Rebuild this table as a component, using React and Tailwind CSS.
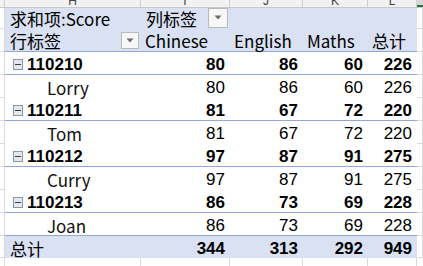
const cjk = "font-['Noto_Sans_CJK_SC','Noto_Sans',sans-serif]";
const num = "font-['Liberation_Sans',Arial,sans-serif]";

const cols = [
    { letter: 'H', w: 'w-[136px]' },
    { letter: 'I', w: 'w-[89px]' },
    { letter: 'J', w: 'w-[73px]' },
    { letter: 'K', w: 'w-[65px]' },
    { letter: 'L', w: 'w-[49px]' },
];

const groups = [
    { id: '110210', name: 'Lorry', scores: [80, 86, 60, 226] },
    { id: '110211', name: 'Tom', scores: [81, 67, 72, 220] },
    { id: '110212', name: 'Curry', scores: [97, 87, 91, 275] },
    { id: '110213', name: 'Joan', scores: [86, 73, 69, 228] },
];

const totals = [344, 313, 292, 949];

const Dropdown = ({ className }) => (
    <div className={`flex items-center justify-center bg-[#f7f7f7] border border-[#b9b9b9] ${className}`}>
        <svg width="8" height="5" viewBox="0 0 8 5">
            <path d="M0.5 0.5 L7.5 0.5 L4 4.5 Z" fill="#6b6b6b" />
        </svg>
    </div>
);

const Collapse = () => (
    <div className="w-[10px] h-[11px] border border-[#8a96ab] bg-[#e3e7ee] flex items-center justify-center">
        <div className="w-[6px] h-[1px] bg-[#3c3c3c]" />
    </div>
);

const rowHeights = ['h-[21px]', 'h-[23px]', 'h-[23px]', 'h-[23px]', 'h-[23px]', 'h-[23px]', 'h-[23px]', 'h-[23px]', 'h-[23px]', 'h-[23px]', 'h-[22px]'];

const Gutter = ({ w }) => (
    <div className={`${w} flex flex-col`}>
        {rowHeights.map((h, i) => (
            <div key={i} className={`${h} border-b border-[#dadada] border-r bg-white`} />
        ))}
    </div>
);

const NumCell = ({ value, bold }) => (
    <div className={`flex items-center justify-end pr-[5px] ${num} text-[17px] text-black ${bold ? 'font-bold' : ''}`}>
        {value}
    </div>
);

export default function App() {
    return (
        <div className="w-[423px] h-[266px] overflow-hidden bg-white flex flex-col">
            {/* sheet column headers, cut off at the top */}
            <div className="flex h-[8px] overflow-hidden bg-[#f2f2f2] border-b border-[#c8c8c8]">
                <div className="w-[5px] border-r border-[#cfcfcf]" />
                {cols.map((c) => (
                    <div key={c.letter} className={`${c.w} flex justify-center items-end border-r border-[#cfcfcf]`}>
                        <span className={`${num} text-[12px] leading-[12px] text-[#444]`}>{c.letter}</span>
                    </div>
                ))}
                <div className="flex-1 bg-[#d6d6d6] border-b-2 border-[#217346]" />
            </div>

            <div className="flex">
                <Gutter w="w-[5px]" />

                <div className="w-[412px] flex flex-col">
                    {/* header row 1 */}
                    <div className="grid grid-cols-[136px_89px_73px_65px_49px] h-[21px] bg-[#d9e1f2]">
                        <div className={`flex items-center pl-[5px] ${cjk} text-[17px] leading-none text-black`}>求和项:Score</div>
                        <div className="flex items-center justify-between pl-[5px] pr-[2px]">
                            <span className={`${cjk} text-[17px] leading-none text-black`}>列标签</span>
                            <Dropdown className="w-[20px] h-[20px] -mt-[2px]" />
                        </div>
                        <div />
                        <div />
                        <div />
                    </div>

                    {/* header row 2 */}
                    <div className="grid grid-cols-[136px_89px_73px_65px_49px] h-[23px] bg-[#d9e1f2] border-b border-[#8ea9db]">
                        <div className="flex items-center justify-between pl-[5px] pr-[2px]">
                            <span className={`${cjk} text-[17px] leading-none text-black`}>行标签</span>
                            <Dropdown className="w-[18px] h-[17px]" />
                        </div>
                        {['Chinese', 'English', 'Maths', '总计'].map((h) => (
                            <div key={h} className={`flex items-center pl-[4px] ${cjk} text-[17px] leading-none text-black`}>{h}</div>
                        ))}
                    </div>

                    {groups.map((g) => (
                        <div key={g.id}>
                            <div className="grid grid-cols-[136px_89px_73px_65px_49px] h-[23px] border-b border-[#8ea9db]">
                                <div className="flex items-center pl-[8px] gap-[4px]">
                                    <Collapse />
                                    <span className={`${num} text-[17px] font-bold leading-none text-black`}>{g.id}</span>
                                </div>
                                {g.scores.map((s, i) => (
                                    <NumCell key={i} value={s} bold />
                                ))}
                            </div>
                            <div className={`grid grid-cols-[136px_89px_73px_65px_49px] h-[23px] ${g.id === '110213' ? 'border-b border-[#8ea9db]' : ''}`}>
                                <div className={`flex items-center pl-[42px] ${cjk} text-[17px] leading-none text-[#111]`}>{g.name}</div>
                                {g.scores.map((s, i) => (
                                    <NumCell key={i} value={s} />
                                ))}
                            </div>
                        </div>
                    ))}

                    {/* grand total */}
                    <div className="grid grid-cols-[136px_89px_73px_65px_49px] h-[22px] bg-[#d9e1f2]">
                        <div className={`flex items-center pl-[5px] ${cjk} text-[17px] leading-none text-black`}>总计</div>
                        {totals.map((t, i) => (
                            <NumCell key={i} value={t} bold />
                        ))}
                    </div>
                </div>

                <Gutter w="flex-1" />
            </div>

            {/* empty sheet cells below */}
            <div className="flex flex-1">
                <div className="w-[5px] border-r border-[#dadada]" />
                {cols.map((c) => (
                    <div key={c.letter} className={`${c.w} border-r border-[#dadada]`} />
                ))}
                <div className="flex-1" />
            </div>
        </div>
    );
}
